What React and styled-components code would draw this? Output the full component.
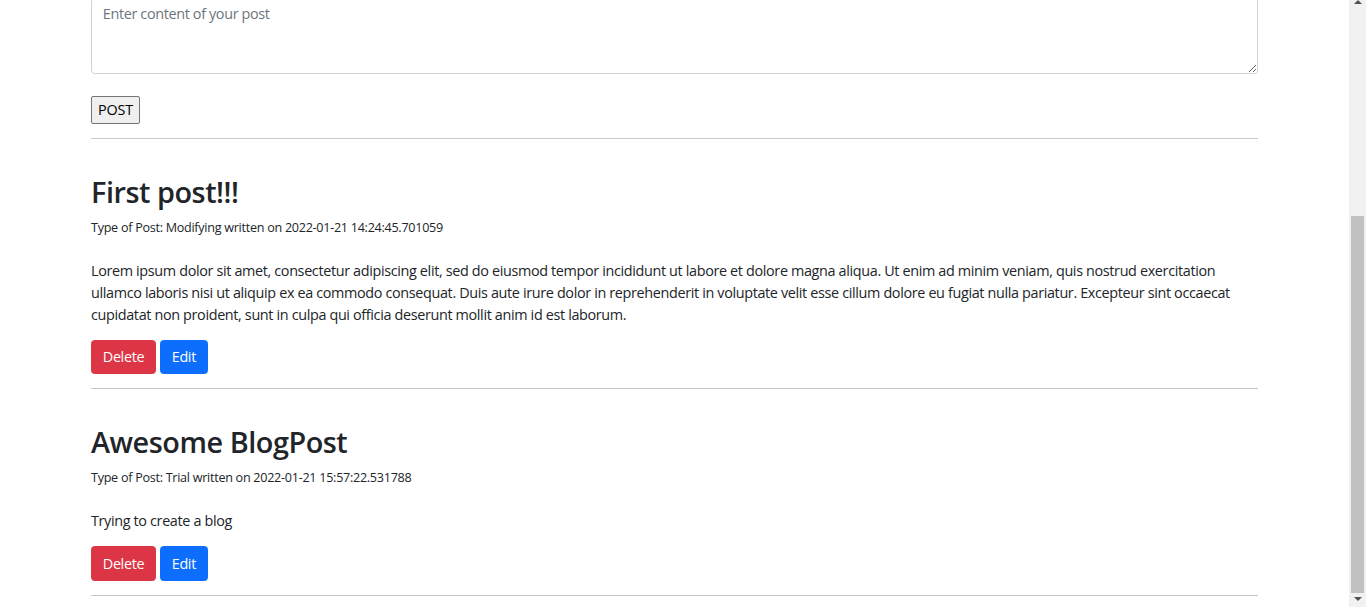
import React from "react";
import styled, { createGlobalStyle } from "styled-components";

const GlobalStyle = createGlobalStyle`
  html, body {
    height: 100%;
  }
  body {
    margin: 0;
    overflow: hidden;
    font-family: "Open Sans", "Noto Sans", sans-serif;
    font-size: 14.4px;
    line-height: 1.5;
    letter-spacing: -0.35px;
    color: #212529;
    background: #fff;
  }
  * {
    box-sizing: border-box;
  }
`;

const Shell = styled.div`
  display: flex;
  height: 100vh;
`;

/* the page is scrolled to its bottom, so the content hangs from the lower edge */
const Viewport = styled.main`
  flex: 1;
  display: flex;
  flex-direction: column;
  justify-content: flex-end;
  overflow: hidden;
`;

const Container = styled.div`
  flex-shrink: 0;
  width: 100%;
  max-width: 1167px;
  margin: 0 auto;
  & > hr:last-child {
    margin-bottom: 11px;
  }
`;

const TextArea = styled.textarea`
  display: block;
  width: 100%;
  padding: 5.4px 10.8px;
  font: inherit;
  line-height: 1.5;
  letter-spacing: inherit;
  color: #212529;
  border: 1px solid #ced4da;
  border-radius: 3.6px;
  resize: vertical;
  &::placeholder {
    color: #6c757d;
  }
`;

const SubmitRow = styled.div`
  display: flex;
  padding-top: 22px;
`;

const PlainButton = styled.button`
  font: inherit;
  line-height: 1.5;
  letter-spacing: -0.2px;
  color: #000;
  background: #efefef;
  border: 1px solid #767676;
  border-radius: 2px;
  padding: 2px 6px;
`;

const Rule = styled.hr`
  margin: 14.4px 0;
  border: 0;
  border-top: 1px solid #212529;
  opacity: 0.25;
`;

const Post = styled.article`
  padding-top: 21.6px;
`;

const PostTitle = styled.h2`
  font-size: 28.8px;
  font-weight: 600;
  letter-spacing: -0.45px;
  line-height: 1.2;
  margin: 0 0 7.2px;
`;

const Meta = styled.div`
  font-size: 12.6px;
  letter-spacing: -0.28px;
  line-height: 21.6px;
  margin-bottom: 21.6px;
`;

const Body = styled.p`
  margin: 0 0 14.4px;
`;

const Actions = styled.div`
  display: flex;
  gap: 4px;
`;

const Btn = styled.button`
  font: inherit;
  line-height: 1.5;
  letter-spacing: inherit;
  color: #fff;
  background: ${(p) => (p.$danger ? "#dc3545" : "#0d6efd")};
  border: 1px solid ${(p) => (p.$danger ? "#dc3545" : "#0d6efd")};
  border-radius: 3.6px;
  padding: 5.4px 10.8px;
  cursor: pointer;
`;

const Scrollbar = styled.div`
  flex: 0 0 17px;
  display: flex;
  flex-direction: column;
  align-items: center;
  background: #f1f1f1;
`;

const Arrow = styled.div`
  width: 0;
  height: 0;
  border-left: 4px solid transparent;
  border-right: 4px solid transparent;
  ${(p) =>
    p.$down
      ? "border-top: 4px solid #505050; margin: 4px 0 6px;"
      : "border-bottom: 4px solid #505050;"}
`;

const Track = styled.div`
  flex: 1;
  width: 100%;
  display: flex;
  flex-direction: column;
  justify-content: flex-end;
  padding: 0 2px;
`;

const Thumb = styled.div`
  height: ${(p) => p.$size}px;
  background: #c1c1c1;
`;

const posts = [
  {
    id: 1,
    title: "First post!!!",
    type: "Modifying",
    date: "2022-01-21 14:24:45.701059",
    content:
      "Lorem ipsum dolor sit amet, consectetur adipiscing elit, sed do eiusmod tempor incididunt ut labore et dolore magna aliqua. Ut enim ad minim veniam, quis nostrud exercitation ullamco laboris nisi ut aliquip ex ea commodo consequat. Duis aute irure dolor in reprehenderit in voluptate velit esse cillum dolore eu fugiat nulla pariatur. Excepteur sint occaecat cupidatat non proident, sunt in culpa qui officia deserunt mollit anim id est laborum.",
  },
  {
    id: 2,
    title: "Awesome BlogPost",
    type: "Trial",
    date: "2022-01-21 15:57:22.531788",
    content: "Trying to create a blog",
  },
];

export default function App() {
  return (
    <>
      <GlobalStyle />
      <Shell>
        <Viewport>
          <Container>
            <TextArea rows={3} placeholder="Enter content of your post" />
            <SubmitRow>
              <PlainButton>POST</PlainButton>
            </SubmitRow>
            <Rule />
            {posts.map((post) => (
              <React.Fragment key={post.id}>
                <Post>
                  <PostTitle>{post.title}</PostTitle>
                  <Meta>
                    Type of Post: {post.type} written on {post.date}
                  </Meta>
                  <Body>{post.content}</Body>
                  <Actions>
                    <Btn $danger>Delete</Btn>
                    <Btn>Edit</Btn>
                  </Actions>
                </Post>
                <Rule />
              </React.Fragment>
            ))}
          </Container>
        </Viewport>
        <Scrollbar>
          <Arrow />
          <Track>
            <Thumb $size={377} />
          </Track>
          <Arrow $down />
        </Scrollbar>
      </Shell>
    </>
  );
}
